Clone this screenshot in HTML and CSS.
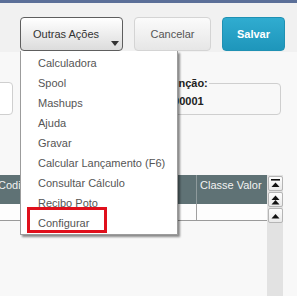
FILE: index.html
```html
<!DOCTYPE html>
<html lang="pt">

<head>
    <meta charset="UTF-8">
    <title>Outras Ações</title>
    <link rel="stylesheet" href="styles.css">
</head>

<body>
    <div id="topLine"></div>

    <div id="toolbar">
        <button class="btn btnMenu">Outras Ações<span class="caret"></span></button>
        <button class="btn btnCancel">Cancelar</button>
        <button class="btn btnSave">Salvar</button>
    </div>

    <div id="formRow">
        <div class="field fieldLeft"></div>
        <fieldset class="field fieldGroup">
            <legend>Função:</legend>
            <span class="fieldValue">000001</span>
        </fieldset>
    </div>

    <div id="gridArea">
        <div id="grid">
            <div class="gridHead">
                <div class="cell cellCode">Codigo</div>
                <div class="cell cellClass">Classe Valor</div>
            </div>
            <div class="gridRow">
                <div class="cell cellCode"></div>
                <div class="cell cellClass"></div>
            </div>
        </div>
        <div id="scrollBar">
            <div class="scrollBtn">
                <svg width="9" height="9" viewBox="0 0 9 9"><rect x="0" y="0" width="9" height="1.6" fill="#111"/><path d="M0.5 8 L4.5 3.5 L8.5 8 Z" fill="#111"/></svg>
            </div>
            <div class="scrollBtn">
                <svg width="9" height="10" viewBox="0 0 9 10"><path d="M0.5 5 L4.5 0.5 L8.5 5 Z" fill="#111"/><path d="M0.5 9.5 L4.5 5 L8.5 9.5 Z" fill="#111"/></svg>
            </div>
            <div class="scrollBtn">
                <svg width="9" height="6" viewBox="0 0 9 6"><path d="M0.5 5.5 L4.5 1 L8.5 5.5 Z" fill="#111"/></svg>
            </div>
        </div>
    </div>

    <!-- dropdown of "Outras Ações" -->
    <ul id="actionMenu">
        <li>Calculadora</li>
        <li>Spool</li>
        <li>Mashups</li>
        <li>Ajuda</li>
        <li>Gravar</li>
        <li>Calcular Lançamento (F6)</li>
        <li>Consultar Cálculo</li>
        <li>Recibo Poto</li>
        <li>Configurar</li>
    </ul>
    <div id="highlight"></div>
</body>

</html>
```

FILE: styles.css
```css
body {
    font-family: 'Liberation Sans', Arial, sans-serif;
    font-size: 11px;
    background: #f8f8f8;
    margin: 0;
    width: 297px;
    height: 296px;
    overflow: hidden;
    position: relative;
}

#topLine {
    height: 3px;
    background: #5b6f98;
}

#toolbar {
    height: 49px;
    box-sizing: border-box;
    padding: 14px 0 0 20px;
    background: #f1f1f1;
    display: flex;
    gap: 11px;
}

.btn {
    height: 34px;
    border-radius: 4px;
    font-family: inherit;
    font-size: 11px;
    padding: 0;
    cursor: pointer;
}

.btnMenu {
    position: relative;
    width: 103px;
    text-align: left;
    padding-left: 12px;
    color: #333;
    border: 1px solid #5e5e5e;
    background: linear-gradient(to bottom, #ffffff, #dcdcdc);
}

.caret {
    position: absolute;
    right: 3px;
    bottom: 4px;
    border-left: 4px solid transparent;
    border-right: 4px solid transparent;
    border-top: 5px solid #333;
}

.btnCancel {
    width: 77px;
    color: #555;
    border: 1px solid #d4d4d4;
    background: linear-gradient(to bottom, #fbfbfb, #e6e6e6);
}

.btnSave {
    width: 63px;
    color: #fff;
    font-weight: bold;
    border: 1px solid #1f91b3;
    background: linear-gradient(to bottom, #30acd0, #1e96bb);
}

#formRow {
    display: flex;
    justify-content: space-between;
    align-items: flex-end;
    margin: 25px 16px 0 -60px;
}

.field {
    border: 1px solid #cfcfcf;
    border-radius: 4px;
    background: #fff;
    box-sizing: border-box;
    height: 33px;
}

.fieldLeft {
    width: 73px;
}

.fieldGroup {
    width: 126px;
    height: 38px;
    margin: 0;
    padding: 0 0 0 11px;
    background: transparent;
}

.fieldGroup legend {
    font-size: 11px;
    font-weight: bold;
    color: #222;
    padding: 0 1px;
    margin-left: -3px;
}

.fieldValue {
    display: block;
    font-weight: bold;
    color: #222;
    margin-top: 6px;
}

#gridArea {
    display: flex;
    margin-top: 60px;
}

#grid {
    width: 267px;
}

.gridHead {
    display: flex;
    height: 29px;
    background: #5f7275;
    color: #f2f2f2;
}

.gridRow {
    display: flex;
    height: 16px;
    background: #fdfdfd;
    border-bottom: 1px solid #9a9a9a;
}

.cell {
    box-sizing: border-box;
    padding: 4px 0 0 3px;
    white-space: nowrap;
    overflow: hidden;
}

.cellCode {
    width: 197px;
    padding-left: 0;
    text-indent: -2px;
    border-right: 1px solid #8e9a9c;
}

.gridRow .cellCode {
    border-right-color: #a0a0a0;
}

.cellClass {
    flex: 1;
}

#scrollBar {
    width: 16px;
    height: 123px;
    background: #e2e2e2;
    display: flex;
    flex-direction: column;
    align-items: center;
    gap: 1px;
    padding-top: 1px;
}

.scrollBtn {
    width: 15px;
    height: 15px;
    box-sizing: border-box;
    border: 1px solid #b5b5b5;
    border-radius: 2px;
    background: linear-gradient(to bottom, #fdfdfd, #e9e9e9);
    display: flex;
    justify-content: center;
    align-items: center;
}

#actionMenu {
    position: absolute;
    left: 20px;
    top: 51px;
    width: 158px;
    box-sizing: border-box;
    margin: 0;
    padding: 2px 0 1px;
    list-style: none;
    background: #fff;
    border: 1px solid #9c9c9c;
    border-top: none;
    box-shadow: 2px 2px 2px rgba(0, 0, 0, 0.45);
}

#actionMenu li {
    height: 20px;
    line-height: 20px;
    padding-left: 17px;
    color: #555;
    white-space: nowrap;
}

#highlight {
    position: absolute;
    left: 27px;
    top: 207px;
    width: 80px;
    height: 26px;
    box-sizing: border-box;
    border: 3px solid #e0101c;
}
```
